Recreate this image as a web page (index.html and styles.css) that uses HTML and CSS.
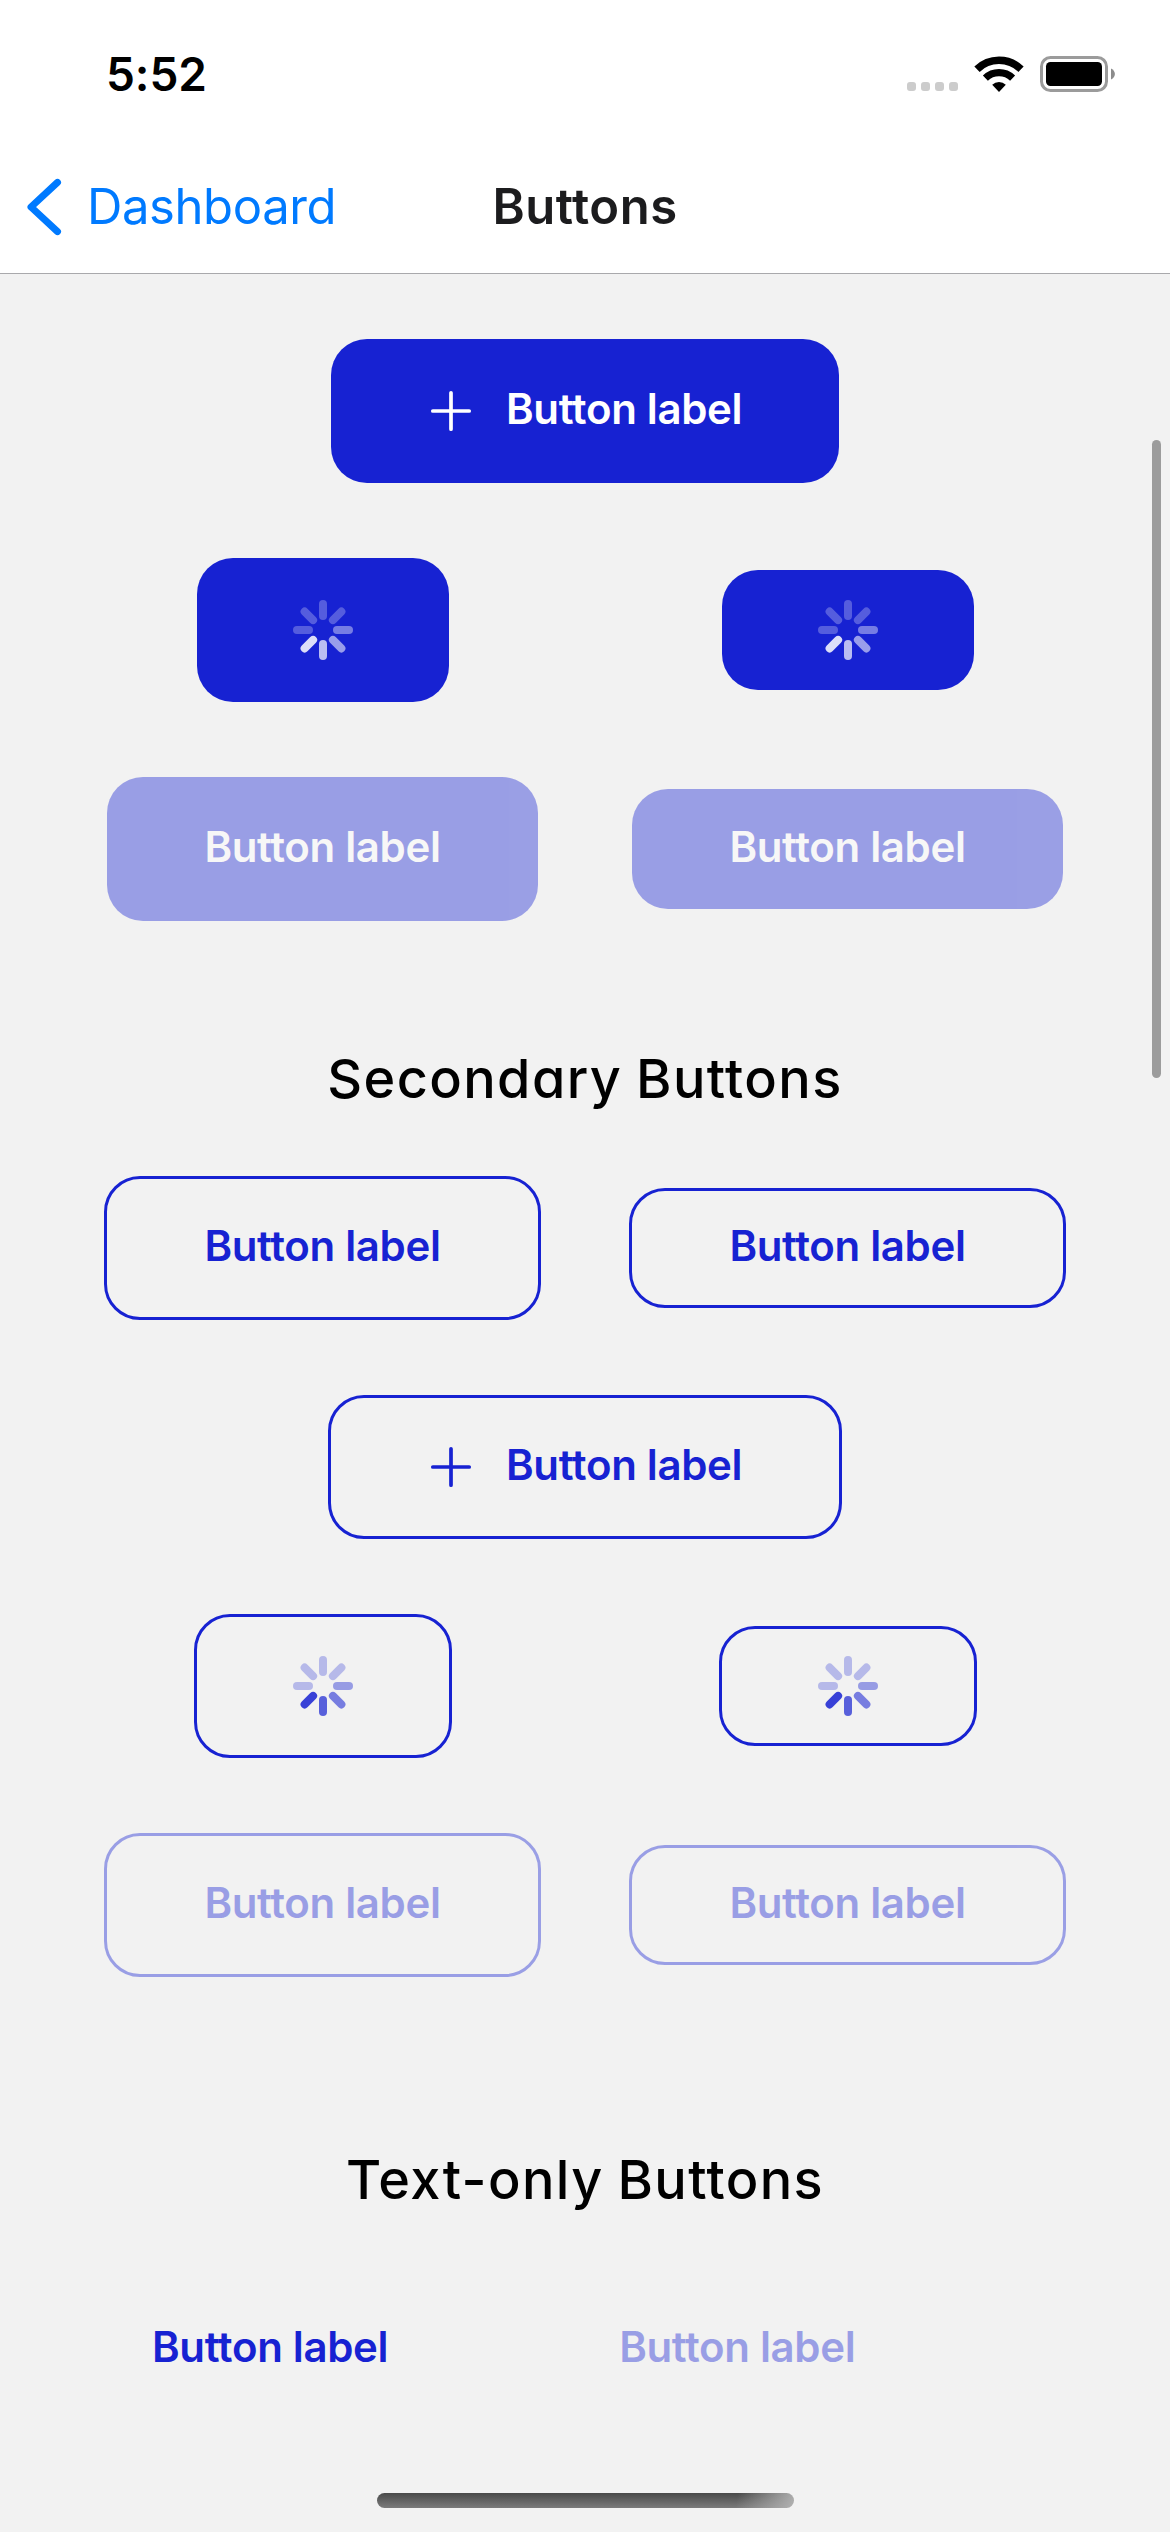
FILE: index.html
```html
<!DOCTYPE html>
<html lang="en">
<head>
<meta charset="utf-8">
<title>Buttons</title>
<link rel="stylesheet" href="styles.css">
</head>
<body>
<svg class="sprite" aria-hidden="true">
  <symbol id="plus" viewBox="0 0 48 48">
    <path d="M24 5.8V42.2M5.8 24H42.2" fill="none" stroke="currentColor" stroke-width="3.7" stroke-linecap="round"/>
  </symbol>
  <symbol id="spinner" viewBox="-30 -30 60 60">
    <g fill="currentColor">
      <rect x="-4" y="-30" width="8" height="20" rx="4" opacity=".27"/>
      <rect x="-4" y="-30" width="8" height="20" rx="4" opacity=".27" transform="rotate(45)"/>
      <rect x="-4" y="-30" width="8" height="20" rx="4" opacity=".41" transform="rotate(90)"/>
      <rect x="-4" y="-30" width="8" height="20" rx="4" opacity=".56" transform="rotate(135)"/>
      <rect x="-4" y="-30" width="8" height="20" rx="4" opacity=".7" transform="rotate(180)"/>
      <rect x="-4" y="-30" width="8" height="20" rx="4" opacity=".85" transform="rotate(225)"/>
      <rect x="-4" y="-30" width="8" height="20" rx="4" opacity=".27" transform="rotate(270)"/>
      <rect x="-4" y="-30" width="8" height="20" rx="4" opacity=".27" transform="rotate(315)"/>
    </g>
  </symbol>
</svg>
<div class="screen">
  <header class="header">
    <div class="status">
      <span class="time">5:52</span>
      <div class="indicators">
        <div class="signal"><i></i><i></i><i></i><i></i></div>
        <svg class="wifi" viewBox="0 0 50 36">
          <g fill="none" stroke="#000">
            <path d="M3 13.2A31.5 31.5 0 0 1 47 13.2" stroke-width="7.6"/>
            <path d="M11.4 22.2A19.6 19.6 0 0 1 38.6 22.2" stroke-width="7.2"/>
          </g>
          <path d="M25 36 18.2 28.8A9.8 9.8 0 0 1 31.8 28.8Z"/>
        </svg>
        <svg class="battery" viewBox="0 0 76 36">
          <rect x="1.5" y="1.5" width="65" height="33" rx="9" fill="none" stroke="#9b9b9b" stroke-width="3"/>
          <rect x="6" y="6" width="56" height="24" rx="4.5"/>
          <path d="M71 12.5C76.2 15 76.2 21 71 23.5Z" fill="#8c8c8c"/>
        </svg>
      </div>
    </div>
    <nav class="navbar">
      <a class="back">
        <svg class="chevron" viewBox="0 0 36 58"><path d="M30.5 4.4 4 29 30.5 53.6" fill="none" stroke="currentColor" stroke-width="7" stroke-linecap="round" stroke-linejoin="round"/></svg>
        <span>Dashboard</span>
      </a>
      <h1 class="title">Buttons</h1>
    </nav>
  </header>
  <main class="content">
    <section class="group primary">
      <div class="row single">
        <button class="btn icon"><svg class="plus"><use href="#plus"/></svg><span>Button label</span></button>
      </div>
      <div class="row">
        <button class="btn loading"><svg class="spinner"><use href="#spinner"/></svg></button>
        <button class="btn loading small"><svg class="spinner"><use href="#spinner"/></svg></button>
      </div>
      <div class="row">
        <button class="btn disabled"><span>Button label</span></button>
        <button class="btn small disabled"><span>Button label</span></button>
      </div>
    </section>
    <h2 class="heading secondary-heading">Secondary Buttons</h2>
    <section class="group secondary">
      <div class="row">
        <button class="btn"><span>Button label</span></button>
        <button class="btn small"><span>Button label</span></button>
      </div>
      <div class="row single">
        <button class="btn icon"><svg class="plus"><use href="#plus"/></svg><span>Button label</span></button>
      </div>
      <div class="row">
        <button class="btn loading"><svg class="spinner"><use href="#spinner"/></svg></button>
        <button class="btn loading small"><svg class="spinner"><use href="#spinner"/></svg></button>
      </div>
      <div class="row">
        <button class="btn disabled"><span>Button label</span></button>
        <button class="btn small disabled"><span>Button label</span></button>
      </div>
    </section>
    <h2 class="heading text-heading">Text-only Buttons</h2>
    <section class="text-buttons">
      <button class="text-btn">Button label</button>
      <button class="text-btn disabled">Button label</button>
    </section>
  </main>
  <div class="scrollbar"></div>
  <div class="home"></div>
</div>
</body>
</html>
```
FILE: styles.css
```css
* { box-sizing: border-box; }
body { margin: 0; }
button { font: inherit; border: 0; background: none; padding: 0; margin: 0; }
.sprite { position: absolute; width: 0; height: 0; }

.screen {
  position: relative;
  width: 1170px;
  height: 2532px;
  overflow: hidden;
  background: #f2f2f2;
  font-family: Inter, "Liberation Sans", sans-serif;
}

.header { height: 274px; background: #fff; border-bottom: 1px solid #a9a9ac; }
.status {
  display: flex;
  justify-content: space-between;
  align-items: center;
  height: 141px;
  padding: 7px 54px 0 106px;
}
.time { font-size: 46px; line-height: 56px; font-weight: 600; letter-spacing: -0.1px; }
.indicators { display: flex; align-items: flex-end; height: 36px; }
.signal { display: flex; gap: 5px; margin: 0 16px 1px 0; }
.signal i { width: 9px; height: 9px; border-radius: 3px; background: #ccc; }
.wifi { width: 50px; height: 36px; margin-right: 16px; }
.battery { width: 76px; height: 36px; }

.navbar {
  display: grid;
  grid-template-columns: 400px 370px 400px;
  align-items: center;
  height: 132px;
}
.back { display: flex; align-items: center; padding-left: 27px; color: #007aff; font-size: 49px; line-height: 60px; letter-spacing: -0.4px; }
.chevron { width: 36px; height: 58px; margin-right: 24px; }
.title { margin: 0; color: #1c1c1e; font-size: 49px; line-height: 60px; font-weight: 600; letter-spacing: 0.5px; text-align: center; }

.content { padding: 65px 60px 0; }
.group { display: grid; gap: 75px; }
.row { display: grid; grid-template-columns: 1fr 1fr; height: 144px; align-items: center; justify-items: center; }
.row.single { grid-template-columns: 1fr; }

.btn {
  display: flex;
  align-items: center;
  justify-content: center;
  width: 431px;
  height: 144px;
  border-radius: 36px;
  font-size: 42px;
  line-height: 52px;
  font-weight: 600;
  letter-spacing: -0.35px;
}
.btn span { padding-bottom: 5px; white-space: nowrap; }
.btn.small { height: 120px; }
.btn.icon { width: 508px; justify-content: flex-start; gap: 31px; padding-left: 96px; }
.btn.loading { width: 252px; }
.disabled { opacity: .4; }
.plus { width: 48px; height: 48px; }
.spinner { width: 60px; height: 60px; }

.primary .btn { background: #1722d2; color: #fff; }
.secondary .btn { width: 437px; border: 3px solid #1722d2; color: #1722d2; }
.secondary .btn.icon { width: 514px; }
.secondary .btn.loading { width: 258px; }

.heading {
  margin: 0;
  color: #000;
  font-size: 54px;
  line-height: 80px;
  font-weight: 500;
  letter-spacing: 1.4px;
  word-spacing: -2px;
  font-feature-settings: "cv11";
  text-align: center;
  white-space: nowrap;
}
.secondary-heading { padding: 118px 0 57px; }
.text-heading { padding: 163px 0 0; }

.text-buttons { display: flex; gap: 231px; padding: 101px 0 0 92px; }
.text-btn {
  color: #1722d2;
  font-size: 42px;
  line-height: 52px;
  font-weight: 600;
  letter-spacing: -0.35px;
  white-space: nowrap;
}

.scrollbar {
  position: absolute;
  top: 440px;
  right: 9px;
  width: 9px;
  height: 638px;
  border-radius: 5px;
  background: #9c9c9c;
}
.home {
  position: absolute;
  left: 377px;
  bottom: 24px;
  width: 417px;
  height: 15px;
  border-radius: 8px;
  background:
    linear-gradient(100deg, rgba(180,180,180,0) 86%, rgba(180,180,180,.95) 100%),
    linear-gradient(#4a4a4a, #7b7b7b);
}
```
